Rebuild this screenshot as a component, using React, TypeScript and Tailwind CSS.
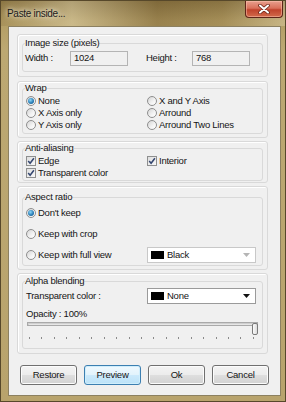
import React from "react";

const FONT = '"Liberation Sans", Arial, sans-serif';

function Radio({ checked }: { checked?: boolean }) {
  return (
    <span className="flex h-[10px] w-[10px] shrink-0 items-center justify-center rounded-full border border-[#8e8e8e] bg-[linear-gradient(135deg,#d4d4d4,#f4f4f4_60%,#ffffff)]">
      {checked && (
        <span className="h-[6px] w-[6px] rounded-full bg-[radial-gradient(circle_at_40%_35%,#8fd8f8,#2a7fb8_55%,#0f4c7a)]" />
      )}
    </span>
  );
}

function Check() {
  return (
    <span className="flex h-[10px] w-[10px] shrink-0 items-center justify-center border border-[#8e8f8f] bg-[linear-gradient(135deg,#dedede,#f8f8f8)]">
      <svg width="8" height="8" viewBox="0 0 8 8">
        <path d="M1.2 4.1 L3.1 6.3 L6.9 1.2" stroke="#34466f" strokeWidth="1.5" fill="none" />
      </svg>
    </span>
  );
}

function Opt({ children, kind, checked }: { children: React.ReactNode; kind: "r" | "c"; checked?: boolean }) {
  return (
    <div className="flex h-[12px] items-center gap-[2px]">
      {kind === "r" ? <Radio checked={checked} /> : <Check />}
      <span>{children}</span>
    </div>
  );
}

function Dropdown({ label, disabled }: { label: string; disabled?: boolean }) {
  return (
    <div
      className={
        disabled
          ? "flex h-[16px] w-[109px] items-center border border-[#c8c8c8] bg-white pl-[3px] pr-[5px]"
          : "flex h-[16px] w-[109px] items-center border border-[#9a9a9a] bg-white pl-[3px] pr-[5px]"
      }
    >
      <span className="h-[8px] w-[13px] bg-black" />
      <span className="ml-[3px] flex-1">{label}</span>
      <svg width="7" height="4" viewBox="0 0 7 4">
        <path d="M0 0 L7 0 L3.5 4 Z" fill={disabled ? "#b5b5b5" : "#111"} />
      </svg>
    </div>
  );
}

function Btn({ children, primary }: { children: React.ReactNode; primary?: boolean }) {
  return (
    <div
      className={
        primary
          ? "flex h-[20px] w-[57px] items-center justify-center rounded-[3px] border border-[#3c7fb1] bg-[linear-gradient(180deg,#f0f9fe_0%,#e2f3fc_48%,#cbe9fb_52%,#bbe2f8_100%)] shadow-[inset_0_0_0_1px_#cfeefc]"
          : "flex h-[20px] w-[57px] items-center justify-center rounded-[3px] border border-[#707070] bg-[linear-gradient(180deg,#f4f4f4_0%,#ececec_48%,#dedede_52%,#d2d2d2_100%)] shadow-[inset_0_0_0_1px_#fcfcfc]"
      }
    >
      {children}
    </div>
  );
}

export default function App() {
  const ticks = Array.from({ length: 19 });
  return (
    <div
      className="flex h-[402px] w-[286px] flex-col overflow-hidden border border-[#57482a] bg-[linear-gradient(180deg,#8f7a48_0%,#b39d64_5%,#bca872_12%,#b8a36c_100%)] text-[9.5px] tracking-[-0.25px] text-[#151515]"
      style={{ fontFamily: FONT }}
    >
      {/* title bar */}
      <div className="flex h-[25px] shrink-0 items-start justify-between bg-[linear-gradient(90deg,rgba(120,95,45,0.2)_0%,rgba(255,248,220,0.3)_25%,rgba(90,65,25,0.3)_55%,rgba(110,85,40,0.2)_78%,rgba(255,248,225,0.25)_100%)]">
        <div className="ml-[6px] mt-[7px] text-[10px] leading-[12px] tracking-[-0.3px] text-[#1a1a1a] [text-shadow:0_0_4px_#f3ecd8,0_0_8px_#efe6cc]">
          Paste inside...
        </div>
        <div className="mr-[2px] flex h-[17px] w-[38px] items-center justify-center rounded-b-[4px] border border-t-0 border-[#5e2418] bg-[linear-gradient(180deg,#e8a08e_0%,#d9705a_45%,#c0432c_55%,#d26a4c_100%)] shadow-[inset_0_0_0_1px_rgba(255,200,180,0.5)]">
          <svg width="12" height="10" viewBox="0 0 12 10">
            <path d="M2 1.5 L10 8.5 M10 1.5 L2 8.5" stroke="#6a2416" strokeWidth="3.6" strokeLinecap="round" />
            <path d="M2 1.5 L10 8.5 M10 1.5 L2 8.5" stroke="#ffffff" strokeWidth="2" strokeLinecap="round" />
          </svg>
        </div>
      </div>

      {/* content */}
      <div className="ml-[7px] flex h-[370px] w-[273px] flex-col border border-[#8c8060] bg-[#f0f0f0] pl-[8px] pt-[7px]">
        {/* Image size */}
        <div className="w-[251px] rounded-[3px] border border-[#d9d9d9] px-[4px] pb-[4px] pt-[2px] shadow-[inset_1px_1px_0_#ffffff]">
          <fieldset className="rounded-[3px] border border-[#d9d9d9] px-[2px] pb-[5px]">
            <legend className="leading-[12px]">Image size (pixels)</legend>
            <div className="mt-[2px] flex h-[15px] items-center">
              <span className="w-[45px]">Width :</span>
              <div className="flex h-[15px] w-[58px] items-center border border-[#b4b4b4] bg-[#f0f0f0] pl-[3px]">1024</div>
              <span className="ml-[18px] w-[46px]">Height :</span>
              <div className="flex h-[15px] w-[58px] items-center border border-[#b4b4b4] bg-[#f0f0f0] pl-[3px]">768</div>
            </div>
          </fieldset>
        </div>

        {/* Wrap */}
        <div className="mt-[4px] w-[251px] rounded-[3px] border border-[#d9d9d9] px-[4px] pb-[3px] shadow-[inset_1px_1px_0_#ffffff]">
          <fieldset className="rounded-[3px] border border-[#d9d9d9] px-[2px] pb-[2px]">
            <legend className="leading-[12px]">Wrap</legend>
            <div className="mt-[1px] grid grid-cols-[121px_1fr] pl-[1px]">
              <Opt kind="r" checked>None</Opt>
              <Opt kind="r">X and Y Axis</Opt>
              <Opt kind="r">X Axis only</Opt>
              <Opt kind="r">Arround</Opt>
              <Opt kind="r">Y Axis only</Opt>
              <Opt kind="r">Arround Two Lines</Opt>
            </div>
          </fieldset>
        </div>

        {/* Anti-aliasing */}
        <div className="mt-[3px] w-[251px] rounded-[3px] border border-[#d9d9d9] px-[4px] pb-[1px] shadow-[inset_1px_1px_0_#ffffff]">
          <fieldset className="rounded-[3px] border border-[#d9d9d9] px-[2px] pb-[1px]">
            <legend className="leading-[12px]">Anti-aliasing</legend>
            <div className="mt-[1px] grid grid-cols-[121px_1fr] pl-[1px]">
              <Opt kind="c">Edge</Opt>
              <Opt kind="c">Interior</Opt>
              <Opt kind="c">Transparent color</Opt>
            </div>
          </fieldset>
        </div>

        {/* Aspect ratio */}
        <div className="mt-[3px] w-[251px] rounded-[3px] border border-[#d9d9d9] px-[4px] pb-[3px] pt-[4px] shadow-[inset_1px_1px_0_#ffffff]">
          <fieldset className="rounded-[3px] border border-[#d9d9d9] px-[2px] pb-[2px]">
            <legend className="leading-[12px]">Aspect ratio</legend>
            <div className="mt-[2px] flex flex-col gap-[5px] pl-[1px]">
              <div className="flex h-[16px] items-center gap-[2px]">
                <Radio checked />
                <span>Don't keep</span>
              </div>
              <div className="flex h-[16px] items-center gap-[2px]">
                <Radio />
                <span>Keep with crop</span>
              </div>
              <div className="grid h-[16px] grid-cols-[121px_1fr] items-center">
                <div className="flex items-center gap-[2px]">
                  <Radio />
                  <span>Keep with full view</span>
                </div>
                <Dropdown label="Black" disabled />
              </div>
            </div>
          </fieldset>
        </div>

        {/* Alpha blending */}
        <div className="mt-[3px] w-[251px] rounded-[3px] border border-[#d9d9d9] px-[4px] pb-[4px] pt-[1px] shadow-[inset_1px_1px_0_#ffffff]">
          <fieldset className="rounded-[3px] border border-[#d9d9d9] px-[2px] pb-[8px]">
            <legend className="leading-[12px]">Alpha blending</legend>
            <div className="mt-[1px] grid h-[16px] grid-cols-[121px_1fr] items-center pl-[1px]">
              <span>Transparent color :</span>
              <Dropdown label="None" />
            </div>
            <div className="mt-[4px] pl-[1px] leading-[12px]">Opacity : 100%</div>
            <div className="relative ml-[2px] h-[14px] w-[231px]">
              <div className="mt-[2px] h-[4px] w-[231px] border border-[#a9a9a9] bg-[#e6e6e6] shadow-[inset_1px_1px_0_#cfcfcf]" />
              <div className="absolute right-[0px] top-[1px] h-[12px] w-[6px] rounded-[2px] border border-[#7a7a7a] bg-[linear-gradient(90deg,#fbfbfb,#dcdcdc)]" />
            </div>
            <div className="ml-[4px] mt-[1px] flex h-[3px] w-[225px] justify-between">
              {ticks.map((_, i) => (
                <span key={i} className="h-[2px] w-[1px] bg-[#8a8a8a]" />
              ))}
            </div>
          </fieldset>
        </div>

        {/* buttons */}
        <div className="ml-[3px] mt-[11px] flex gap-[7px]">
          <Btn>Restore</Btn>
          <Btn primary>Preview</Btn>
          <Btn>Ok</Btn>
          <Btn>Cancel</Btn>
        </div>
      </div>
    </div>
  );
}
